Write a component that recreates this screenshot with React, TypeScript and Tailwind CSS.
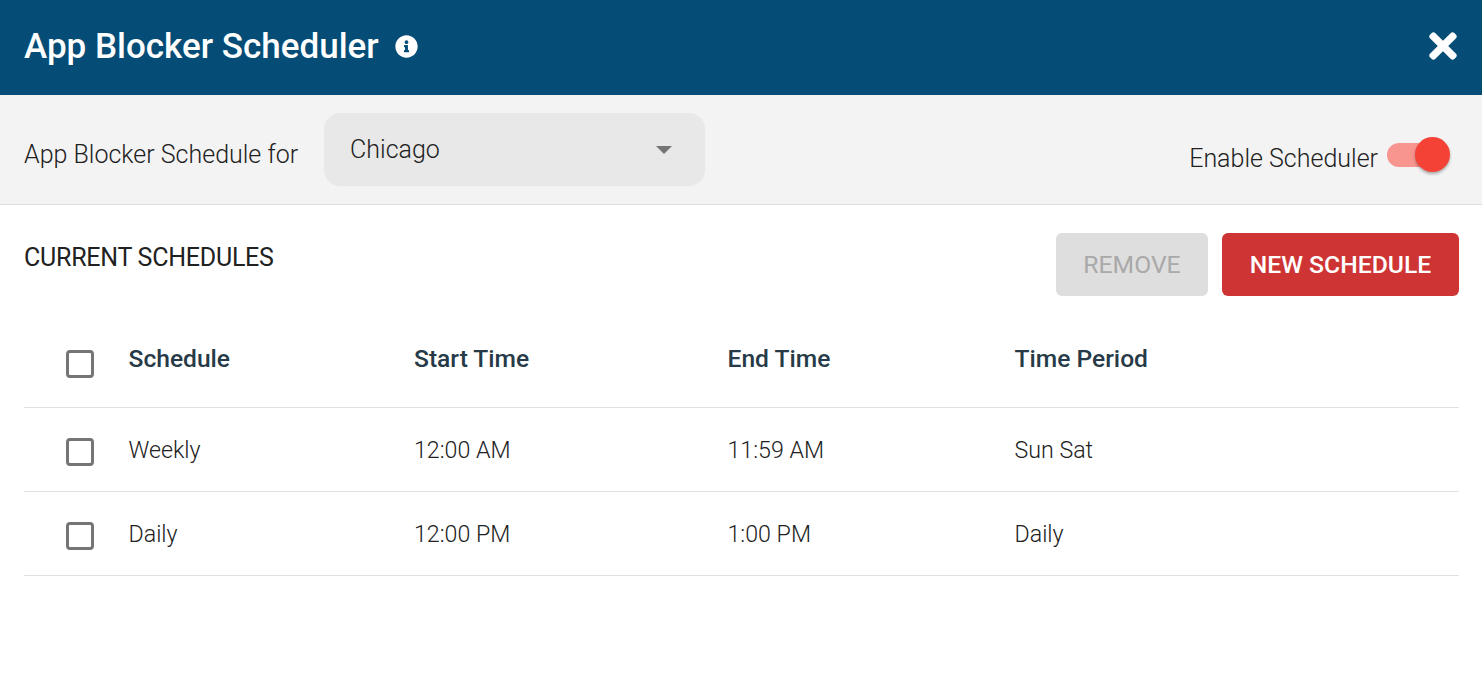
import React from "react";
import { FaInfoCircle, FaTimes } from "react-icons/fa";

const cols = "grid grid-cols-[105px_285.5px_313.5px_287px_1fr] items-start";

function Box() {
  return <div className="ml-[42px] h-[28px] w-[28px] rounded-[4px] border-[3px] border-[#757575] bg-white" />;
}

function Row({ cells }: { cells: string[] }) {
  return (
    <div className={`${cols} h-[84px] border-b border-[#e0e0e0] text-[23.2px] font-light leading-[28px] text-[#212121]`}>
      <div className="pt-[30px]"><Box /></div>
      {cells.map((c) => (
        <div key={c} className="pt-[28px] -ml-[0.5px]">{c}</div>
      ))}
    </div>
  );
}

export default function App() {
  return (
    <div className="h-[689px] w-[1482px] overflow-hidden bg-white font-['Roboto',sans-serif]">
      <header className="flex h-[95px] items-center justify-between bg-[#054d77] pl-[24px] pr-[24px] text-white">
        <div className="flex items-center pb-[2px]">
          <h1 className="text-[35px] font-medium leading-[40px]">App Blocker Scheduler</h1>
          <FaInfoCircle className="ml-[16px] mb-[1px] h-[23px] w-[23px]" />
        </div>
        <FaTimes className="mb-[3px] h-[40px] w-[30px]" />
      </header>

      <div className="flex h-[110px] items-start justify-between border-b border-[#dddddd] bg-[#f3f3f3] pl-[24px] pr-[32px]">
        <div className="flex items-start pt-[18px]">
          <span className="mt-[28px] text-[25px] font-light leading-[28px] text-[#212121]">App Blocker Schedule for</span>
          <div className="relative ml-[26px] flex h-[73px] w-[381px] items-start rounded-[16px] bg-[#e8e8e8] pl-[26px] pt-[20px] text-[25px] font-light leading-[34px] text-[#212121]">
            Chicago
            <span className="absolute left-[332px] top-[33px] h-0 w-0 border-x-[8px] border-t-[8px] border-x-transparent border-t-[#757575]" />
          </div>
        </div>
        <div className="flex items-center pt-[43px]">
          <span className="text-[25px] font-light leading-[42px] text-[#212121]">Enable Scheduler</span>
          <div className="relative ml-[9px] mb-[10px] h-[24px] w-[63px]">
            <div className="absolute left-0 top-[1px] h-[24px] w-[46px] rounded-full bg-[#f8958f]" />
            <div className="absolute left-[28px] top-[-5px] h-[35px] w-[35px] rounded-full bg-[#f44336] shadow-[0_2px_3px_rgba(0,0,0,0.3)]" />
          </div>
        </div>
      </div>

      <main className="pl-[24px] pr-[23px]">
        <div className="flex items-start justify-between pt-[28px]">
          <h2 className="mt-[11px] text-[25px] font-normal leading-[28px] tracking-[-0.25px] text-[#212121]">CURRENT SCHEDULES</h2>
          <div className="flex gap-[14px]">
            <button className="h-[63px] w-[152px] rounded-[6px] bg-[#dedede] text-[24.7px] font-normal text-[#a9a9a9]">REMOVE</button>
            <button className="h-[63px] w-[237px] rounded-[6px] bg-[#cf3434] text-[24.7px] font-medium text-white">NEW SCHEDULE</button>
          </div>
        </div>
        <div className={`${cols} mt-[18px] h-[94px] border-b border-[#e0e0e0] text-[24.6px] font-[480] leading-[28px] text-[#263a47]`}>
          <div className="pt-[36px]"><Box /></div>
          <div className="pt-[31px] -ml-[0.5px]">Schedule</div>
          <div className="pt-[31px] -ml-[0.5px]">Start Time</div>
          <div className="pt-[31px] -ml-[0.5px]">End Time</div>
          <div className="pt-[31px] -ml-[0.5px]">Time Period</div>
        </div>
        <Row cells={["Weekly", "12:00 AM", "11:59 AM", "Sun Sat"]} />
        <Row cells={["Daily", "12:00 PM", "1:00 PM", "Daily"]} />
      </main>
    </div>
  );
}
